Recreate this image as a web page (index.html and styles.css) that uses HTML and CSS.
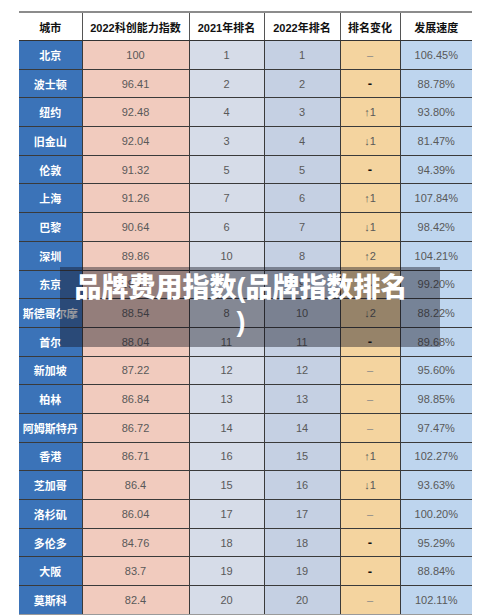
FILE: index.html
```html
<!DOCTYPE html>
<html lang="zh-CN">
    <head>
        <meta charset="utf-8">
        <link rel="stylesheet" href="styles.css">
    </head>
    <body>
<div id="page">
    <table id="rank">
        <colgroup>
            <col class="c1"><col class="c2"><col class="c3"><col class="c4"><col class="c5"><col class="c6">
        </colgroup>
        <thead>
            <tr>
                <th>城市</th>
                <th>2022科创能力指数</th>
                <th>2021年排名</th>
                <th>2022年排名</th>
                <th>排名变化</th>
                <th>发展速度</th>
            </tr>
        </thead>
        <tbody>
            <tr><td class="city">北京</td><td class="idx">100</td><td class="r21">1</td><td class="r22">1</td><td class="chg"><span class="thin">–</span></td><td class="spd">106.45%</td></tr>
            <tr><td class="city">波士顿</td><td class="idx">96.41</td><td class="r21">2</td><td class="r22">2</td><td class="chg"><span class="bold">-</span></td><td class="spd">88.78%</td></tr>
            <tr><td class="city">纽约</td><td class="idx">92.48</td><td class="r21">4</td><td class="r22">3</td><td class="chg">↑1</td><td class="spd">93.80%</td></tr>
            <tr><td class="city">旧金山</td><td class="idx">92.04</td><td class="r21">3</td><td class="r22">4</td><td class="chg">↓1</td><td class="spd">81.47%</td></tr>
            <tr><td class="city">伦敦</td><td class="idx">91.32</td><td class="r21">5</td><td class="r22">5</td><td class="chg"><span class="bold">-</span></td><td class="spd">94.39%</td></tr>
            <tr><td class="city">上海</td><td class="idx">91.26</td><td class="r21">7</td><td class="r22">6</td><td class="chg">↑1</td><td class="spd">107.84%</td></tr>
            <tr><td class="city">巴黎</td><td class="idx">90.64</td><td class="r21">6</td><td class="r22">7</td><td class="chg">↓1</td><td class="spd">98.42%</td></tr>
            <tr><td class="city">深圳</td><td class="idx">89.86</td><td class="r21">10</td><td class="r22">8</td><td class="chg">↑2</td><td class="spd">104.21%</td></tr>
            <tr><td class="city">东京</td><td class="idx">89.12</td><td class="r21">9</td><td class="r22">9</td><td class="chg"><span class="bold">-</span></td><td class="spd">99.20%</td></tr>
            <tr><td class="city">斯德哥尔摩</td><td class="idx">88.54</td><td class="r21">8</td><td class="r22">10</td><td class="chg">↓2</td><td class="spd">88.22%</td></tr>
            <tr><td class="city">首尔</td><td class="idx">88.04</td><td class="r21">11</td><td class="r22">11</td><td class="chg"><span class="bold">-</span></td><td class="spd">89.68%</td></tr>
            <tr><td class="city">新加坡</td><td class="idx">87.22</td><td class="r21">12</td><td class="r22">12</td><td class="chg"><span class="thin">–</span></td><td class="spd">95.60%</td></tr>
            <tr><td class="city">柏林</td><td class="idx">86.84</td><td class="r21">13</td><td class="r22">13</td><td class="chg"><span class="thin">–</span></td><td class="spd">98.85%</td></tr>
            <tr><td class="city">阿姆斯特丹</td><td class="idx">86.72</td><td class="r21">14</td><td class="r22">14</td><td class="chg"><span class="thin">–</span></td><td class="spd">97.47%</td></tr>
            <tr><td class="city">香港</td><td class="idx">86.71</td><td class="r21">16</td><td class="r22">15</td><td class="chg">↑1</td><td class="spd">102.27%</td></tr>
            <tr><td class="city">芝加哥</td><td class="idx">86.4</td><td class="r21">15</td><td class="r22">16</td><td class="chg">↓1</td><td class="spd">93.63%</td></tr>
            <tr><td class="city">洛杉矶</td><td class="idx">86.04</td><td class="r21">17</td><td class="r22">17</td><td class="chg"><span class="thin">–</span></td><td class="spd">100.20%</td></tr>
            <tr><td class="city">多伦多</td><td class="idx">84.76</td><td class="r21">18</td><td class="r22">18</td><td class="chg"><span class="bold">-</span></td><td class="spd">95.29%</td></tr>
            <tr><td class="city">大阪</td><td class="idx">83.7</td><td class="r21">19</td><td class="r22">19</td><td class="chg"><span class="bold">-</span></td><td class="spd">88.84%</td></tr>
            <tr><td class="city">莫斯科</td><td class="idx">82.4</td><td class="r21">20</td><td class="r22">20</td><td class="chg"><span class="thin">–</span></td><td class="spd">102.11%</td></tr>
        </tbody>
    </table>
    <div id="caption">品牌费用指数(品牌指数排名)</div>
</div>
    </body>
</html>
```

FILE: styles.css
```css
body{
    margin: 0;
    background-color: #fff;
    font-family: "Liberation Sans", "Noto Sans CJK SC", sans-serif;
}
#page{
    position: relative;
    padding: 11px 0 0 19px;
}
#rank{
    border-collapse: collapse;
    table-layout: fixed;
    width: 453px;
    font-size: 11px;
}
.c1{ width: 63px; }
.c2{ width: 107px; }
.c3{ width: 75px; }
.c4{ width: 76px; }
.c5{ width: 60px; }
.c6{ width: 72px; }
#rank th{
    height: 27px;
    padding: 0;
    background-color: #fff;
    color: #111;
    font-weight: bold;
    border-top: 2px solid #8c8c8c;
    border-left: 1px solid #555;
    border-bottom: 1px solid #333;
}
#rank th:first-child{
    border-left: 0;
}
#rank td{
    height: 27.7px;
    padding: 0;
    text-align: center;
    color: #595959;
    border: 1px solid #3a3a3a;
    border-top: 0;
}
#rank td:first-child{
    border-left: 0;
}
#rank td:last-child{
    border-right: 0;
}
#rank tr:last-child td{
    border-bottom: 1px solid #9a9a9a;
}
#rank td.city{
    background-color: #3b73b8;
    color: #fff;
    font-weight: bold;
}
.idx{ background-color: #f1cbbe; }
.r21{ background-color: #d6dce8; }
.r22{ background-color: #c5d0e3; }
.chg{ background-color: #f4d49f; }
.spd{ background-color: #bed5ee; }
.thin{
    color: #888;
}
.bold{
    color: #111;
    font-weight: bold;
    font-size: 13px;
}
#caption{
    position: absolute;
    left: 60px;
    top: 267px;
    width: 338px;
    height: 70px;
    padding: 4px 30px 6px 12px;
    background-color: rgba(20, 20, 30, 0.42);
    color: #fff;
    font-family: "Liberation Sans", "Noto Sans CJK SC", sans-serif;
    font-weight: 900;
    font-size: 27px;
    line-height: 34px;
    text-align: center;
    line-break: anywhere;
}
```
